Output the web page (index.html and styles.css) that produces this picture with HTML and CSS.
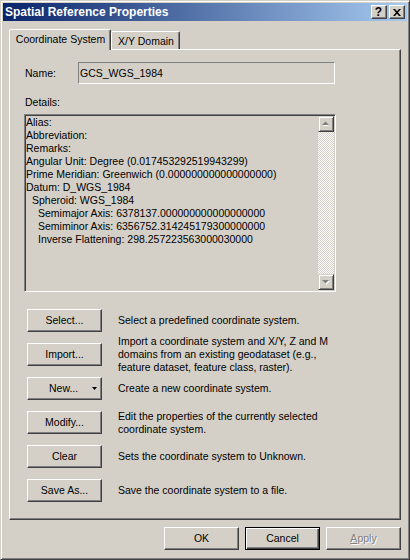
FILE: index.html
```html
<!DOCTYPE html>
<html>
<head>
<meta charset="utf-8">
<title>Spatial Reference Properties</title>
<link rel="stylesheet" href="styles.css">
</head>
<body>
<div class="window">
  <div class="titlebar">
    <span class="title">Spatial Reference Properties</span>
    <div class="tbtns">
      <span class="tbtn help">?</span>
      <span class="tbtn close"><svg width="8" height="7" viewBox="0 0 8 7"><path d="M0 0h2l2 2.2 2-2.2h2L5 3.5 8 7H6L4 4.8 2 7H0l3-3.5z" fill="#000"/></svg></span>
    </div>
  </div>
  <div class="content">
    <div class="tabs">
      <div class="tab active">Coordinate System</div>
      <div class="tab">X/Y Domain</div>
    </div>
    <div class="panel">
      <div class="name-row">
        <span class="label">Name:</span>
        <div class="field">GCS_WGS_1984</div>
      </div>
      <div class="details-label">Details:</div>
      <div class="details">
        <div class="details-text">
          <div>Alias:</div>
          <div>Abbreviation:</div>
          <div>Remarks:</div>
          <div>Angular Unit: Degree (0.017453292519943299)</div>
          <div>Prime Meridian: Greenwich (0.000000000000000000)</div>
          <div>Datum: D_WGS_1984</div>
          <div class="ind1">Spheroid: WGS_1984</div>
          <div class="ind2">Semimajor Axis: 6378137.000000000000000000</div>
          <div class="ind2">Semiminor Axis: 6356752.314245179300000000</div>
          <div class="ind2">Inverse Flattening: 298.257223563000030000</div>
        </div>
        <div class="vscroll">
          <div class="sbtn"><svg width="8" height="6" viewBox="0 0 8 6"><polygon points="1,5 4,2 7,5" fill="#fff"/><polygon points="0,4 3.5,0.5 7,4" fill="#808080"/></svg></div>
          <div class="track"></div>
          <div class="sbtn"><svg width="8" height="6" viewBox="0 0 8 6"><polygon points="1,2 8,2 4.5,5.5" fill="#fff"/><polygon points="0,1 7,1 3.5,4.5" fill="#808080"/></svg></div>
        </div>
      </div>
      <div class="actions">
        <div class="action">
          <button class="btn">Select...</button>
          <div class="desc">Select a predefined coordinate system.</div>
        </div>
        <div class="action">
          <button class="btn">Import...</button>
          <div class="desc">Import a coordinate system and X/Y, Z and M<br>domains from an existing geodataset (e.g.,<br>feature dataset, feature class, raster).</div>
        </div>
        <div class="action">
          <button class="btn btn-new"><span>New...</span><svg class="drop" width="5" height="3" viewBox="0 0 5 3"><polygon points="0,0 5,0 2.5,3" fill="#000"/></svg></button>
          <div class="desc">Create a new coordinate system.</div>
        </div>
        <div class="action">
          <button class="btn">Modify...</button>
          <div class="desc">Edit the properties of the currently selected<br>coordinate system.</div>
        </div>
        <div class="action">
          <button class="btn">Clear</button>
          <div class="desc">Sets the coordinate system to Unknown.</div>
        </div>
        <div class="action">
          <button class="btn">Save As...</button>
          <div class="desc">Save the coordinate system to a file.</div>
        </div>
      </div>
    </div>
    <div class="dialog-btns">
      <button class="btn">OK</button>
      <button class="btn default">Cancel</button>
      <button class="btn disabled"><u>A</u>pply</button>
    </div>
  </div>
</div>
</body>
</html>
```
FILE: styles.css
```css
* { box-sizing: border-box; }
html, body { margin: 0; padding: 0; }
body {
  font-family: "Liberation Sans", Arial, sans-serif;
  font-size: 10.5px;
  color: #000;
  background: #d4d0c8;
}
.window {
  width: 410px;
  height: 560px;
  background: #d4d0c8;
  border: 1px solid;
  border-color: #d4d0c8 #404040 #404040 #d4d0c8;
  box-shadow: inset 1px 1px #fff, inset -1px -1px #808080;
  padding: 2px;
  display: flex;
  flex-direction: column;
}
.titlebar {
  height: 18px;
  flex: none;
  display: flex;
  align-items: center;
  justify-content: space-between;
  padding: 0 2px;
  background: linear-gradient(to right, #0a246a, #a6caf0);
}
.title {
  color: #fff;
  font-weight: bold;
  font-size: 12px;
  line-height: 14px;
}
.tbtns { display: flex; gap: 2px; }
.tbtn {
  width: 16px;
  height: 14px;
  background: #d4d0c8;
  border: 1px solid;
  border-color: #fff #404040 #404040 #fff;
  box-shadow: inset -1px -1px #808080;
  display: flex;
  align-items: center;
  justify-content: center;
}
.help {
  font-weight: bold;
  font-size: 12px;
  line-height: 12px;
  padding-right: 1px;
}
.close svg { display: block; margin-left: -1px; }
.content {
  flex: 1;
  display: flex;
  flex-direction: column;
  padding: 8px 6px 0 6px;
}
.tabs {
  height: 20px;
  flex: none;
  display: flex;
  align-items: flex-end;
}
.tab {
  height: 18px;
  width: 69px;
  border: 1px solid;
  border-bottom: none;
  border-color: #fff #404040 transparent #fff;
  box-shadow: inset -1px 0 #808080;
  border-radius: 2px 2px 0 0;
  background: #d4d0c8;
  display: flex;
  align-items: center;
  justify-content: center;
  padding-left: 1px;
}
.tab.active {
  width: 102px;
  height: 21px;
  margin-bottom: -1px;
  position: relative;
  z-index: 1;
  padding-bottom: 2px;
}
.panel {
  flex: 1;
  border: 1px solid;
  border-color: #fff #404040 #404040 #fff;
  box-shadow: inset -1px -1px #808080;
  padding: 0 15px;
  display: flex;
  flex-direction: column;
}
.name-row {
  margin-top: 12px;
  height: 22px;
  display: flex;
  align-items: center;
}
.label { width: 53px; }
.field {
  width: 257px;
  height: 22px;
  border: 1px solid;
  border-color: #808080 #fff #fff #808080;
  padding-left: 1px;
  display: flex;
  align-items: center;
}
.details-label {
  margin-top: 12px;
  line-height: 13px;
}
.details {
  margin-top: 5px;
  margin-left: -1px;
  width: 312px;
  height: 178px;
  border: 1px solid;
  border-color: #808080 #fff #fff #808080;
  box-shadow: inset 1px 1px #404040, inset -1px -1px #d4d0c8;
  padding: 1px;
  display: flex;
}
.details-text {
  flex: 1;
  line-height: 13px;
  white-space: nowrap;
  overflow: hidden;
}
.ind1 { padding-left: 6px; }
.ind2 { padding-left: 12px; }
.vscroll {
  width: 16px;
  display: flex;
  flex-direction: column;
}
.sbtn {
  width: 16px;
  height: 16px;
  flex: none;
  background: #d4d0c8;
  border: 1px solid;
  border-color: #d4d0c8 #404040 #404040 #d4d0c8;
  box-shadow: inset 1px 1px #fff, inset -1px -1px #808080;
  display: flex;
  align-items: center;
  justify-content: center;
}
.sbtn svg { display: block; }
.track {
  flex: 1;
  background-color: #d4d0c8;
  background-image: conic-gradient(#fff 25%, #d4d0c8 0 50%, #fff 0 75%, #d4d0c8 0);
  background-size: 2px 2px;
}
.actions {
  margin-top: 17px;
  margin-left: 2px;
  display: flex;
  flex-direction: column;
  gap: 11px;
}
.action {
  height: 23px;
  display: flex;
  align-items: center;
}
.btn {
  width: 75px;
  height: 23px;
  flex: none;
  background: #d4d0c8;
  border: 1px solid;
  border-color: #fff #404040 #404040 #fff;
  box-shadow: inset -1px -1px #808080;
  font: inherit;
  color: #000;
  padding: 0;
  margin: 0;
  line-height: 13px;
}
.btn-new {
  display: flex;
  align-items: center;
  padding: 0 4px 0 21px;
}
.btn-new .drop { margin-left: auto; display: block; }
.desc {
  margin-left: 16px;
  line-height: 13px;
  white-space: nowrap;
}
.dialog-btns {
  flex: none;
  display: flex;
  justify-content: flex-end;
  gap: 6px;
  margin: 7px 0 7px;
}
.btn.default {
  border: 1px solid #000;
  box-shadow: inset 1px 1px #fff, inset -1px -1px #404040, inset -2px -2px #808080;
}
.btn.disabled {
  color: #808080;
  text-shadow: 1px 1px #fff;
}
```
